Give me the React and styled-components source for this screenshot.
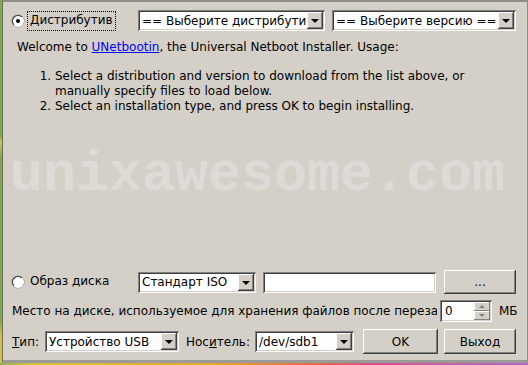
import React from "react"
import styled, { createGlobalStyle } from "styled-components"

const GlobalStyle = createGlobalStyle`
  html, body {
    margin: 0;
    padding: 0;
  }
  body {
    width: 528px;
    height: 365px;
    overflow: hidden;
    font-family: "DejaVu Sans", sans-serif;
    font-size: 12px;
    color: #000;
  }
`

const Desktop = styled.div`
  width: 528px;
  height: 365px;
  box-sizing: border-box;
  padding: 0 0 2px 2px;
  display: flex;
  background:
    linear-gradient(90deg, #8fb255 0%, #d8c040 6%, #e8a830 40%, #e46848 60%, #d8508a 70%, #b068c8 100%) bottom / 100% 2px no-repeat,
    linear-gradient(180deg, #7ea84c 0%, #7ea84c 37%, #c8c84a 39%, #7ea84c 43%, #7ea84c 88%, #d8c040 92%, #d8c040 100%);
`

const Window = styled.div`
  flex: 1;
  display: flex;
  flex-direction: column;
  box-sizing: border-box;
  background: #d4d0c8;
  border-top: 2px solid #8e8c88;
  border-right: 2px solid #8e8c88;
  border-left: 1px solid #6c6a66;
  border-bottom: 3px solid #9c9a96;
  padding: 8px 9px 6px 9px;
`

const Row = styled.div`
  display: flex;
  align-items: center;
  height: ${(p) => p.$h}px;
  margin-top: ${(p) => p.$mt || 0}px;
  flex-shrink: 0;
`

const RadioGroup = styled.div`
  display: flex;
  align-items: center;
  width: 126px;
  flex-shrink: 0;
`

const Radio = styled.span`
  position: relative;
  width: 12px;
  height: 12px;
  box-sizing: border-box;
  border-radius: 50%;
  background: #fff;
  border: 1px solid;
  border-color: #404040 #fff #fff #404040;
  box-shadow: 0 0 0 0.5px #808080;
  margin-right: 3px;
  flex-shrink: 0;

  &::after {
    content: "";
    display: ${(p) => (p.$checked ? "block" : "none")};
    position: absolute;
    left: 3px;
    top: 3px;
    width: 4px;
    height: 4px;
    border-radius: 50%;
    background: #000;
  }
`

const RadioLabel = styled.span`
  padding: 1px 2px 2px;
  border: 1px dotted ${(p) => (p.$focus ? "#000" : "transparent")};
  white-space: nowrap;
  line-height: 15px;
`

const Combo = styled.div`
  position: relative;
  width: ${(p) => p.$w}px;
  height: 21px;
  box-sizing: border-box;
  background: #fff;
  box-shadow: inset 1px 1px #808080, inset -1px -1px #fff, inset 2px 2px #404040, inset -2px -2px #d4d0c8;
  display: flex;
  align-items: center;
  padding: 0 18px 0 4px;
  flex-shrink: 0;
  margin-left: ${(p) => p.$ml || 0}px;
`

const ComboText = styled.span`
  flex: 1;
  min-width: 0;
  overflow: hidden;
  white-space: nowrap;
`

const ArrowBox = styled.span`
  position: absolute;
  right: 2px;
  top: 2px;
  bottom: 2px;
  width: 16px;
  background: #d4d0c8;
  box-shadow: inset -1px -1px #404040, inset 1px 1px #fff, inset -2px -2px #808080;
  display: flex;
  align-items: center;
  justify-content: center;

  &::after {
    content: "";
    border-left: 4px solid transparent;
    border-right: 4px solid transparent;
    border-top: 4px solid #000;
    margin-top: 1px;
  }
`

const TextField = styled.div`
  width: ${(p) => p.$w}px;
  height: 21px;
  box-sizing: border-box;
  background: #fff;
  box-shadow: inset 1px 1px #808080, inset -1px -1px #fff, inset 2px 2px #404040, inset -2px -2px #d4d0c8;
  margin-left: ${(p) => p.$ml || 0}px;
  flex-shrink: 0;
`

const Button = styled.div`
  width: ${(p) => p.$w}px;
  height: ${(p) => p.$h}px;
  box-sizing: border-box;
  background: #d4d0c8;
  box-shadow: inset -1px -1px #404040, inset 1px 1px #fff, inset -2px -2px #808080, inset 2px 2px #d4d0c8;
  display: flex;
  align-items: center;
  justify-content: center;
  margin-left: ${(p) => p.$ml || 0}px;
  flex-shrink: 0;
`

const Welcome = styled.p`
  margin: 9px 0 0 5px;
  line-height: 15px;
`

const Link = styled.a`
  color: #0000ff;
  text-decoration: underline;
`

const Steps = styled.ol`
  margin: 14px 0 0 0;
  padding-left: 43px;

  li {
    line-height: 15px;
  }
`

const Watermark = styled.div`
  margin: 30px 0 0 -2px;
  font-family: "Liberation Mono", monospace;
  font-weight: bold;
  font-size: 55px;
  color: #dddbd7;
  white-space: nowrap;
  flex-shrink: 0;
`

const Spacer = styled.div`
  flex: 1;
`

const Label = styled.span`
  width: ${(p) => (p.$w ? `${p.$w}px` : "auto")};
  margin-left: ${(p) => p.$ml || 0}px;
  white-space: nowrap;
  overflow: hidden;
  flex-shrink: 0;
`

const Spin = styled.div`
  position: relative;
  width: 52px;
  height: 22px;
  box-sizing: border-box;
  background: #fff;
  box-shadow: inset 1px 1px #808080, inset -1px -1px #fff, inset 2px 2px #404040, inset -2px -2px #d4d0c8;
  display: flex;
  align-items: center;
  padding: 0 18px 0 5px;
  margin-left: 3px;
  flex-shrink: 0;
`

const SpinButtons = styled.span`
  position: absolute;
  right: 2px;
  top: 2px;
  bottom: 2px;
  width: 16px;
  display: flex;
  flex-direction: column;
`

const SpinHalf = styled.span`
  flex: 1;
  background: #d4d0c8;
  box-shadow: inset -1px -1px #808080, inset 1px 1px #fff;
  display: flex;
  align-items: center;
  justify-content: center;

  &::after {
    content: "";
    border-left: 3px solid transparent;
    border-right: 3px solid transparent;
    ${(p) => (p.$up ? "border-bottom" : "border-top")}: 3px solid #808080;
  }
`

const App = () => (
  <>
    <GlobalStyle />
    <Desktop>
      <Window>
        <Row $h={21}>
          <RadioGroup>
            <Radio $checked />
            <RadioLabel $focus>
              <u>Д</u>истрибутив
            </RadioLabel>
          </RadioGroup>
          <Combo $w={187}>
            <ComboText>== Выберите дистрибутив ==</ComboText>
            <ArrowBox />
          </Combo>
          <Combo $w={184} $ml={7}>
            <ComboText>== Выберите версию ==</ComboText>
            <ArrowBox />
          </Combo>
        </Row>

        <Welcome>
          Welcome to <Link href="#">UNetbootin</Link>, the Universal Netboot
          Installer. Usage:
        </Welcome>
        <Steps>
          <li>
            Select a distribution and version to download from the list above, or
            manually specify files to load below.
          </li>
          <li>Select an installation type, and press OK to begin installing.</li>
        </Steps>

        <Watermark>unixawesome.com</Watermark>
        <Spacer />

        <Row $h={24}>
          <RadioGroup>
            <Radio />
            <RadioLabel>
              Образ <u>д</u>иска
            </RadioLabel>
          </RadioGroup>
          <Combo $w={118}>
            <ComboText>Стандарт ISO</ComboText>
            <ArrowBox />
          </Combo>
          <TextField $w={173} $ml={7} />
          <Button $w={72} $h={24} $ml={8}>
            ...
          </Button>
        </Row>

        <Row $h={22} $mt={6}>
          <Label $w={425}>
            Место на диске, используемое для хранения файлов после перезагрузки
            (только Ubuntu):
          </Label>
          <Spin>
            <ComboText>0</ComboText>
            <SpinButtons>
              <SpinHalf $up />
              <SpinHalf />
            </SpinButtons>
          </Spin>
          <Label $ml={7}>МБ</Label>
        </Row>

        <Row $h={25} $mt={7}>
          <Label $w={33}>
            <u>Т</u>ип:
          </Label>
          <Combo $w={134}>
            <ComboText>Устройство USB</ComboText>
            <ArrowBox />
          </Combo>
          <Label $w={69} $ml={7}>
            Нос<u>и</u>тель:
          </Label>
          <Combo $w={99}>
            <ComboText>/dev/sdb1</ComboText>
            <ArrowBox />
          </Combo>
          <Button $w={75} $h={25} $ml={9}>
            OK
          </Button>
          <Button $w={72} $h={25} $ml={6}>
            Выход
          </Button>
        </Row>
      </Window>
    </Desktop>
  </>
)

export default App
